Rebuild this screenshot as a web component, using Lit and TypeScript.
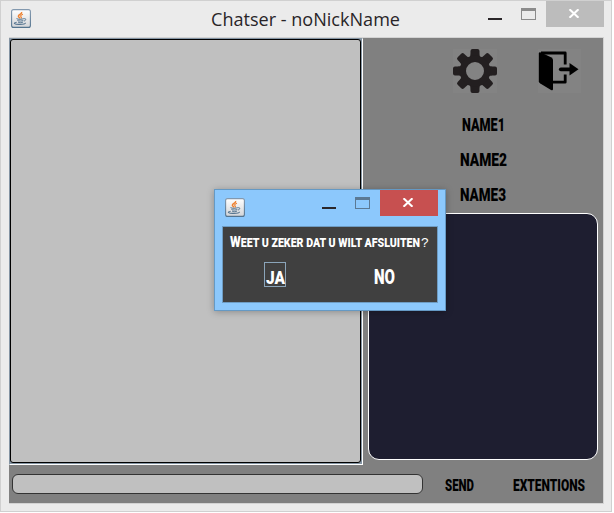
import { LitElement, html, css, svg } from "lit";
import { customElement, property } from "lit/decorators.js";

/** Condensed display lettering, fitted to a given width. */
@customElement("stencil-text")
class StencilText extends LitElement {
  @property() text = "";
  @property({ type: Number }) width = 40;
  @property({ type: Number }) size = 16;
  static styles = css`
    :host { display: block; line-height: 0; }
    svg { display: block; overflow: visible; }
    text { font-family: "Roboto", "Liberation Sans", sans-serif; font-weight: 900; fill: currentColor; }
  `;
  render() {
    const h = Math.round(this.size * 0.72);
    return html`<svg width=${this.width} height=${h}>
      <text x="0" y=${h} font-size=${this.size} textLength=${this.width} lengthAdjust="spacingAndGlyphs">${this.text}</text>
    </svg>`;
  }
}

@customElement("java-icon")
class JavaIcon extends LitElement {
  static styles = css`
    :host { display: block; width: 20px; height: 19px; }
    svg { display: block; }
  `;
  render() {
    return html`<svg width="20" height="19" viewBox="0 0 20 19" fill="none">
      <defs><linearGradient id="g" x1="0" y1="0" x2="0" y2="1"><stop offset="0" stop-color="#fff"/><stop offset="1" stop-color="#d2d4d7"/></linearGradient>
      <linearGradient id="b" x1="0" y1="0" x2="0" y2="1"><stop offset="0" stop-color="#8298ae"/><stop offset="1" stop-color="#54748f"/></linearGradient></defs>
      <rect x=".6" y=".6" width="18.8" height="17.8" rx="2" fill="url(#g)" stroke="url(#b)" stroke-width="1.1"/>
      <path d="M10.6 3C11.5 5 7 5.7 7.4 7.3C7.6 8.2 8.7 8.7 9 9.4" stroke="#ee8130" stroke-width="1.5"/>
      <path d="M12 5.3C9.5 6 9.2 7.2 10.1 7.9C10.8 8.5 10.3 9 9.8 9.4" stroke="#ee8130" stroke-width="1.1"/>
      <path d="M5.5 9.6C7 10.6 11 10.4 12.8 9.6M6.4 11.4C8 12.3 11 12.2 12.4 11.4M7 13C8.4 13.9 10.8 13.9 12 13M13.2 9.7C15.5 9.1 15 11.6 12.9 12.2" stroke="#567590" stroke-width="1"/>
      <path d="M5.7 13.2C1.3 14.1 3.7 15.5 8.2 15.4C12 15.5 15.4 14.7 14 13.9" stroke="#567590" stroke-width="1.1"/>
    </svg>`;
  }
}

@customElement("window-controls")
class WindowControls extends LitElement {
  static styles = css`
    :host { display: flex; align-items: flex-start; --close: #bcbcbc; --max: #8b8b8b; }
    .min { width: 14px; height: 2px; background: #2a2629; margin-top: 17px; }
    .max { box-sizing: border-box; width: 15px; height: 12px; border: 1px solid var(--max); border-top-width: 3px; margin: 7px 10px 0 19px; }
    .close { width: 58px; height: 26px; background: var(--close); display: flex; justify-content: center; align-items: center; }
    svg { display: block; margin-right: 2px; margin-bottom: 1px; }
  `;
  render() {
    return html`<div class="min"></div><div class="max"></div>
      <div class="close"><svg width="12" height="9" viewBox="0 0 12 9"><path d="M1.5.3 10.5 8.7M10.5.3 1.5 8.7" stroke="#fff" stroke-width="2.1"/></svg></div>`;
  }
}

const teeth = [0, 45, 90, 135, 180, 225, 270, 315];

@customElement("app-root")
class AppRoot extends LitElement {
  static styles = css`
    :host { display: block; width: 614px; height: 513px; background: #fff; font-family: "Open Sans", "Noto Sans", sans-serif; overflow: hidden; position: relative; }
    * { box-sizing: border-box; }
    .window { width: 612px; height: 512px; border: 1px solid #d0d0d0; background: #ebebeb; padding: 0 7px 7px 8px; display: flex; flex-direction: column; }
    .bar { height: 36px; display: grid; grid-template-columns: 202px 1fr auto; align-items: start; }
    .bar java-icon { margin: 8px 0 0 2px; }
    .title { display: block; margin-top: 2px; overflow: visible; }
    .title text { font: 18.5px "Open Sans", sans-serif; fill: #282428; }
    .content { height: 467px; width: 595px; border: 1px solid #d3d3d3; border-left: 0; background: #808080; display: grid; grid-template-columns: 354px 1fr; grid-template-rows: 427px 1fr; }
    .history { border: 1px solid #8494a3; border-right-color: #fff; border-bottom-color: #fff; background: #8494a3; padding-right: 1px; padding-bottom: 1px; }
    .paper { height: 100%; border: 1px solid #000; border-radius: 3px; background: #c0c0c0; }
    .side { display: flex; flex-direction: column; padding: 10px 5px 0 5px; }
    .tools { height: 46px; display: flex; gap: 40px; padding-left: 84px; }
    .names { height: 119px; display: flex; flex-direction: column; align-items: center; gap: 22px; padding: 24px 0 0 0; }
    .users { height: 247px; border: 1px solid #fff; border-radius: 11px; background: #1e1e30; }
    .footer { grid-column: 1 / 3; display: flex; align-items: flex-start; padding: 9px 0 0 3px; color: #000; }
    .input { width: 411px; height: 20px; border: 1px solid #333; border-radius: 6px; background: #c0c0c0; }
    .send { margin: 5px 0 0 22px; }
    .ext { margin: 5px 0 0 39px; }
    .dialog { position: absolute; left: 214px; top: 189px; width: 232px; height: 122px; border: 1px solid #6599c4; background: #8cc8fc; padding: 0 7px; box-shadow: 0 1px 7px rgba(0,0,0,.28); }
    .dbar { height: 36px; display: flex; justify-content: space-between; padding-left: 3px; }
    .dbar java-icon { margin-top: 8px; }
    .dbar window-controls { --close: #c75050; --max: #5b7994; }
    .body { width: 216px; height: 77px; border: 1px solid #6e9cc3; background: #404040; color: #fff; padding: 9px 0 0 7px; }
    .question { display: block; overflow: visible; }
    .question text { font: 900 12.5px "Roboto", sans-serif; fill: #fff; }
    .question .initial { font-size: 14.5px; }
    .question .mark { font: 13.5px "Liberation Sans", sans-serif; }
    .answers { display: flex; align-items: flex-start; padding: 15px 0 0 34px; }
    .ja { width: 22px; height: 25px; border: 1px solid #8ba5ba; padding: 7px 0 0 1px; }
    .no { margin: 8px 0 0 88px; }
  `;
  render() {
    return html`
      <div class="window">
        <div class="bar">
          <java-icon></java-icon>
          <svg class="title" width="189" height="30"><text x="0" y="23" textLength="189" lengthAdjust="spacingAndGlyphs">Chatser - noNickName</text></svg>
          <window-controls></window-controls>
        </div>
        <div class="content">
          <div class="history"><div class="paper"></div></div>
          <div class="side">
            <div class="tools">
              <svg width="46" height="46" viewBox="0 0 46 46">
                <rect x="1" y="1" width="44" height="44" fill="#838383"/>
                ${teeth.map((a) => svg`<path transform="rotate(${a} 23 23)" d="M16 12C18.5 9 18.5 7 18.5 3Q18.5 1 20.5 1H25.5Q27.5 1 27.5 3C27.5 7 27.5 9 30 12Z" fill="#231f20"/>`)}
                <circle cx="23" cy="23" r="12.2" fill="none" stroke="#231f20" stroke-width="6.4"/>
              </svg>
              <svg width="44" height="46" viewBox="0 -1 44 46">
                <rect x="0" y="0" width="43" height="44" fill="#838383"/>
                <path d="M3 4H27.2V15.5M27.2 25.5V33.2H15" fill="none" stroke="#000" stroke-width="2.8" stroke-linejoin="round"/>
                <path d="M.8 4Q1.3 2.9 2.8 3.5L13 8.2Q15 9.3 15 11V40Q15 42 13 41L2.3 34.6Q.8 33.6.8 32.3Z"/>
                <path d="M22.8 20.3H33" stroke="#000" stroke-width="3.8" stroke-linecap="round"/>
                <path d="M31.5 14.1 40.5 20.3 31.5 26.6Z"/>
              </svg>
            </div>
            <div class="names">
              <stencil-text text="NAME1" width="43" size="18"></stencil-text>
              <stencil-text text="NAME2" width="47" size="18"></stencil-text>
              <stencil-text text="NAME3" width="46" size="18"></stencil-text>
            </div>
            <div class="users"></div>
          </div>
          <div class="footer">
            <div class="input"></div>
            <stencil-text class="send" text="SEND" width="29" size="16"></stencil-text>
            <stencil-text class="ext" text="EXTENTIONS" width="72" size="16"></stencil-text>
          </div>
        </div>
      </div>
      <div class="dialog">
        <div class="dbar"><java-icon></java-icon><window-controls></window-controls></div>
        <div class="body">
          <svg class="question" width="200" height="11">
            <text x="0" y="10.5" textLength="190" lengthAdjust="spacingAndGlyphs"><tspan class="initial">W</tspan>EET U ZEKER DAT U WILT AFSLUITEN</text>
            <text class="mark" x="191" y="11">?</text>
          </svg>
          <div class="answers">
            <div class="ja"><stencil-text text="JA" width="19" size="19"></stencil-text></div>
            <stencil-text class="no" text="NO" width="21" size="20"></stencil-text>
          </div>
        </div>
      </div>`;
  }
}
